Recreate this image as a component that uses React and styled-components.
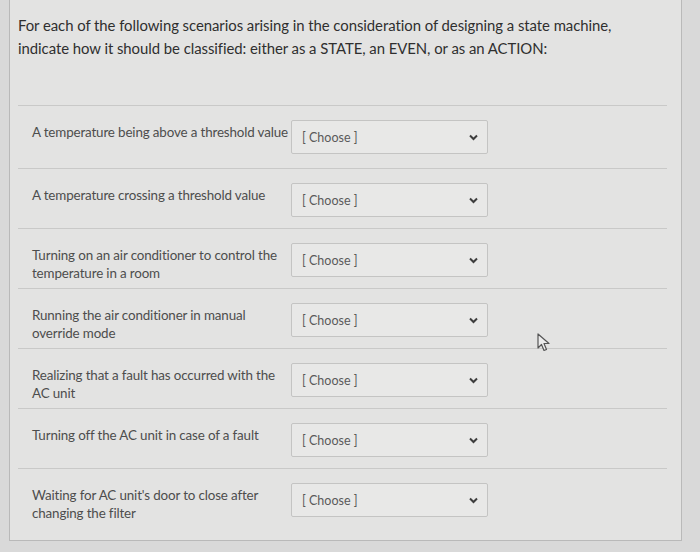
import React from "react"
import styled, { createGlobalStyle } from "styled-components"

const GlobalStyle = createGlobalStyle`
  html, body {
    margin: 0;
    padding: 0;
    background: #d9d9d9;
    font-family: Lato, "Open Sans", sans-serif;
  }
`

const Page = styled.div`
  position: relative;
  width: 700px;
  height: 552px;
  overflow: hidden;
  background: #d9d9d9;
`

const Card = styled.section`
  margin-left: 9px;
  width: 673px;
  height: 541px;
  box-sizing: border-box;
  background: #e3e3e2;
  border: 1px solid #b9b9b9;
  border-top: none;
  padding: 14px 14px 0 8px;
`

const Prompt = styled.p`
  margin: 0;
  font-size: 14.9px;
  line-height: 23px;
  color: #2f2f2f;
  letter-spacing: -0.05px;
`

const Answers = styled.div`
  margin-top: 45px;
`

const Row = styled.div`
  display: flex;
  align-items: flex-start;
  height: ${(p) => p.$h || 60}px;
  box-sizing: border-box;
  padding-top: 14px;
  border-top: 1px solid #c9c9c8;
`

const Label = styled.div`
  width: 273px;
  padding: 3px 0 0 14px;
  box-sizing: border-box;
  font-size: 13.4px;
  line-height: 18px;
  color: #4d4d4d;
  letter-spacing: -0.15px;
`

const Select = styled.div`
  width: 197px;
  height: 34px;
  box-sizing: border-box;
  display: flex;
  align-items: center;
  justify-content: space-between;
  padding: 0 9px 0 10px;
  background: #e8e8e7;
  border: 1px solid #c4c4c3;
  border-radius: 2px;
  font-size: 12.5px;
  color: #5a5a5a;
`

const Chevron = () => (
  <svg width="9" height="7" viewBox="0 0 9 7">
    <path d="M1 1.5 L4.5 5 L8 1.5" fill="none" stroke="#3d3d3d" strokeWidth="2" />
  </svg>
)

const Cursor = styled.svg`
  position: absolute;
  left: 537px;
  top: 333px;
`

const scenarios = [
  "A temperature being above a threshold value",
  "A temperature crossing a threshold value",
  "Turning on an air conditioner to control the temperature in a room",
  "Running the air conditioner in manual override mode",
  "Realizing that a fault has occurred with the AC unit",
  "Turning off the AC unit in case of a fault",
  "Waiting for AC unit's door to close after changing the filter",
]

const App = () => (
  <Page>
    <GlobalStyle />
    <Card>
      <Prompt>
        For each of the following scenarios arising in the consideration of designing a state machine,
        <br />
        indicate how it should be classified: either as a STATE, an EVEN, or as an ACTION:
      </Prompt>
      <Answers>
        {scenarios.map((s, i) => (
          <Row key={i} $h={i === 0 ? 63 : 60}>
            <Label>{s}</Label>
            <Select>
              <span>[ Choose ]</span>
              <Chevron />
            </Select>
          </Row>
        ))}
      </Answers>
    </Card>
    <Cursor width="14" height="20" viewBox="0 0 14 20">
      <path d="M1 1 L1 15 L4.5 11.5 L7 17.5 L9.5 16.5 L7 10.5 L12 10.5 Z" fill="#ececec" stroke="#555" strokeWidth="1.2" strokeLinejoin="round" />
    </Cursor>
  </Page>
)

export default App
